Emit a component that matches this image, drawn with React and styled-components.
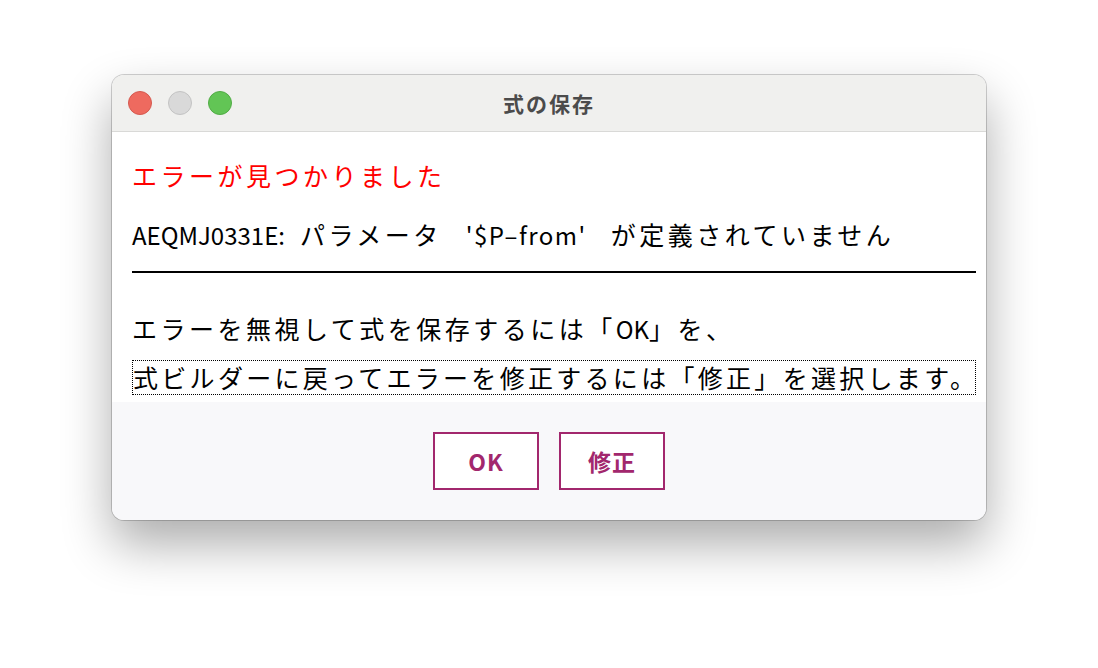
import React from "react";
import styled, { createGlobalStyle } from "styled-components";

const Global = createGlobalStyle`
  html, body { margin: 0; padding: 0; background: #ffffff; }
  body { font-family: "Noto Sans CJK JP", "Noto Sans", sans-serif; }
`;

const Page = styled.div`
  width: 1098px;
  height: 668px;
  display: flex;
  justify-content: center;
  align-items: flex-start;
  padding-top: 75px;
  box-sizing: border-box;
  background: #ffffff;
`;

const Window = styled.div`
  width: 874px;
  height: 445px;
  border-radius: 12px;
  overflow: hidden;
  display: flex;
  flex-direction: column;
  box-shadow: 0 0 0 1px rgba(0, 0, 0, 0.18), 0 24px 50px rgba(0, 0, 0, 0.33);
  background: #ffffff;
`;

const TitleBar = styled.div`
  height: 57px;
  flex: none;
  background: #f0f0ee;
  border-bottom: 1px solid #d9d9d7;
  display: grid;
  grid-template-columns: 1fr auto 1fr;
  align-items: center;
  padding: 0 16px;
  box-sizing: border-box;
`;

const Lights = styled.div`
  display: flex;
  gap: 16px;
`;

const Light = styled.span`
  width: 24px;
  height: 24px;
  border-radius: 50%;
  box-sizing: border-box;
  background: ${(p) => p.$bg};
  border: 1px solid ${(p) => p.$bd};
`;

const Title = styled.div`
  font-family: "Noto Sans CJK JP", sans-serif;
  font-weight: 700;
  font-size: 21px;
  color: #4b4b4b;
  letter-spacing: 2px;
`;

const Content = styled.div`
  flex: 1;
  min-height: 0;
  background: #ffffff;
  padding: 28px 10px 0 20px;
  display: flex;
  flex-direction: column;
`;

const Line = styled.div`
  font-family: "Noto Sans CJK JP", sans-serif;
  font-size: 25px;
  line-height: 30px;
  letter-spacing: 3.5px;
  white-space: nowrap;
  color: ${(p) => p.$color || "#000000"};
  margin-top: ${(p) => p.$mt || 0}px;
`;

const Latin = styled.span`
  font-size: 24px;
  letter-spacing: ${(p) => p.$ls || 0}px;
`;

const Gap = styled.span`
  display: inline-block;
  width: ${(p) => p.$w}px;
  letter-spacing: 0;
`;

const Divider = styled.div`
  height: 2px;
  background: #000000;
  margin-top: 21px;
`;

const Focus = styled.div`
  margin-top: 16px;
  border: 1px dotted #000000;
  padding: 1px 0 2px 0;
  font-family: "Noto Sans CJK JP", sans-serif;
  font-size: 25px;
  line-height: 30px;
  letter-spacing: 3.3px;
  white-space: nowrap;
  color: #000000;
`;

const Footer = styled.div`
  height: 118px;
  flex: none;
  background: #f8f8fa;
  display: flex;
  justify-content: center;
  align-items: center;
  gap: 20px;
`;

const Button = styled.button`
  width: 106px;
  height: 58px;
  box-sizing: border-box;
  background: #ffffff;
  border: 2px solid #a2276d;
  border-radius: 0;
  color: #a2276d;
  font-family: "Noto Sans CJK JP", sans-serif;
  font-weight: 700;
  font-size: 23px;
  letter-spacing: 1px;
  padding: 0;
  cursor: pointer;
`;

export default function App() {
  return (
    <>
      <Global />
      <Page>
        <Window>
          <TitleBar>
            <Lights>
              <Light $bg="#ee6a5f" $bd="#d5594f" />
              <Light $bg="#d9d9d9" $bd="#c3c3c3" />
              <Light $bg="#62c555" $bd="#51ac45" />
            </Lights>
            <Title>式の保存</Title>
            <span />
          </TitleBar>
          <Content>
            <Line $color="#ff0000">エラーが見つかりました</Line>
            <Line $mt={29}>
              <Latin>AEQMJ0331E:</Latin>
              <Gap $w={15}> </Gap>パラメータ<Gap $w={24}> </Gap>
              <Latin $ls={1.5}>'$P–from'</Latin>
              <Gap $w={24}> </Gap>が定義されていません
            </Line>
            <Divider />
            <Line $mt={40}>
              エラーを無視して式を保存するには「<Latin>OK</Latin>」を、
            </Line>
            <Focus>式ビルダーに戻ってエラーを修正するには「修正」を選択します。</Focus>
          </Content>
          <Footer>
            <Button>OK</Button>
            <Button>修正</Button>
          </Footer>
        </Window>
      </Page>
    </>
  );
}
